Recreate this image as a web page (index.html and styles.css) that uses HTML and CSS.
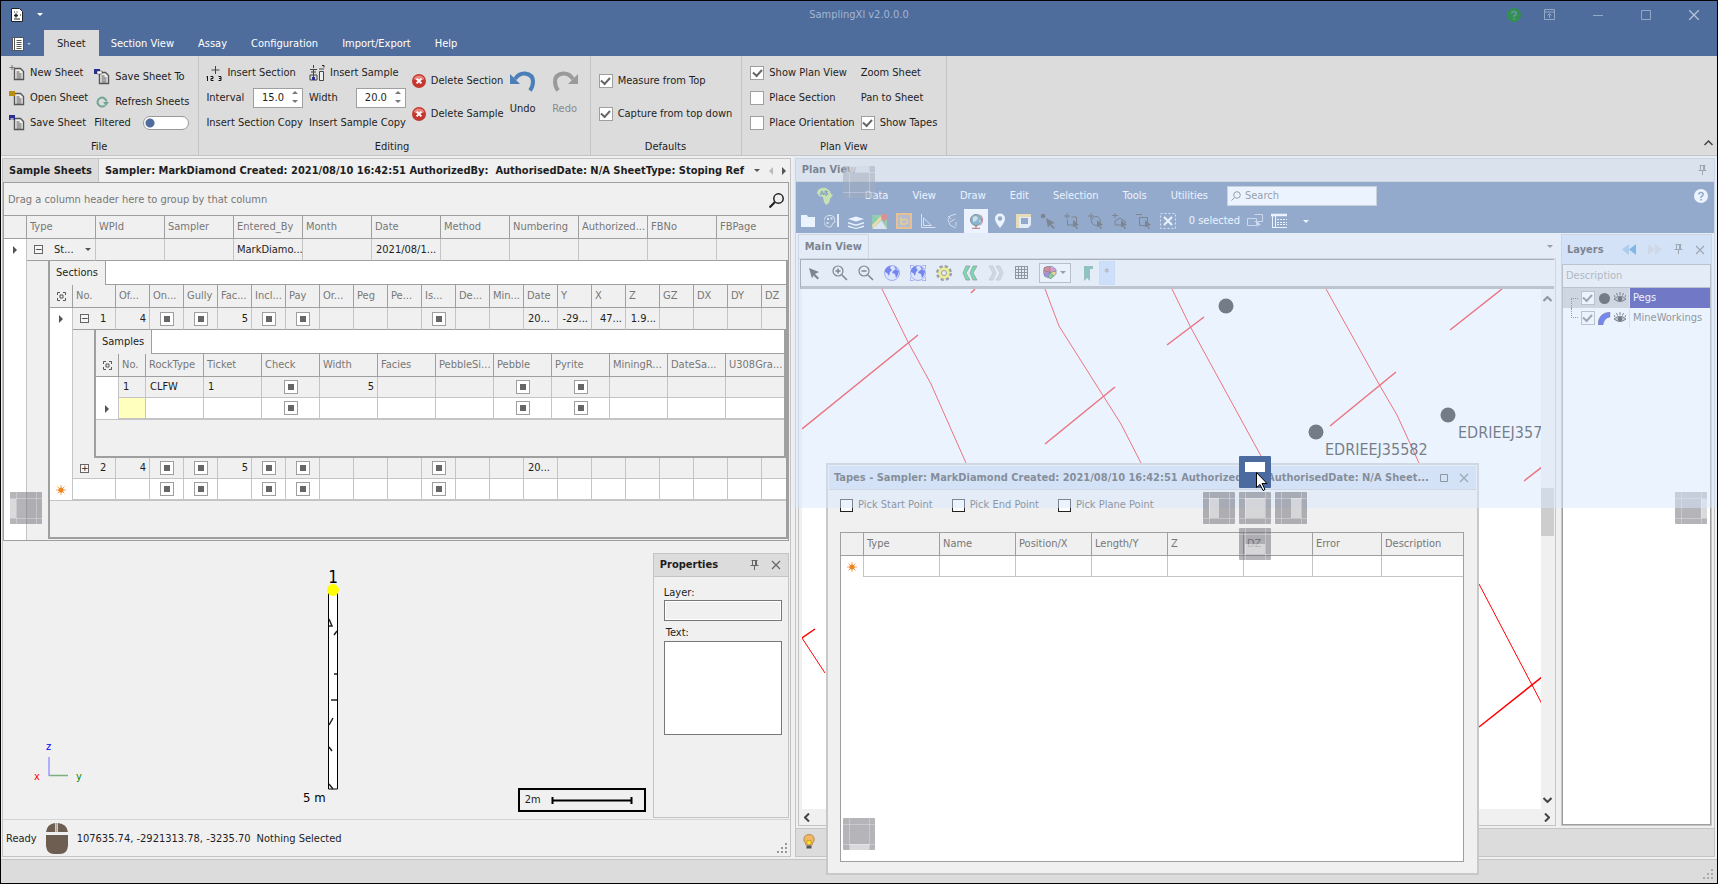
FILE: index.html
```html
<!DOCTYPE html>
<html lang="en">
<head>
<meta charset="utf-8">
<title>SamplingXl v2.0.0.0</title>
<link rel="stylesheet" href="styles.css">
</head>
<body>
<svg class="defs" aria-hidden="true">
  <symbol id="i-doc" viewBox="0 0 16 16"><path d="M5.5 3.500h6l3 3v8h-9z" fill="#eee" stroke="#555" stroke-width="1.400"/><path d="M7.500 7h3M7.500 9h5M7.500 11h5M7.500 13h5" stroke="#555"/></symbol>
  <symbol id="i-pin" viewBox="0 0 9 11"><path d="M1.500.500h6M2.500 1v4M6.500 1v4M5.500 1v4M.500 5.500h8M4.500 6v4" fill="none" stroke="#666"/></symbol>
  <symbol id="i-x" viewBox="0 0 10 10"><path d="M1 1l8 8M9 1l-8 8" stroke="#666" stroke-width="1.200"/></symbol>
  <symbol id="i-focus" viewBox="0 0 9 9"><path d="M.500 3v-2.500h2.500M6 .500h2.500v2.500M8.500 6v2.500h-2.500M3 8.500h-2.500v-2.500M3 3h3v3h-3z" fill="none" stroke="#555"/></symbol>
  <symbol id="i-new" viewBox="0 0 10 10"><path d="M5 0v10M0 5h10M1.500 1.500l7 7M8.500 1.500l-7 7" stroke="#f5a55a"/><circle cx="5" cy="5" r="2.600" fill="#ee8722"/></symbol>
  <symbol id="i-del" viewBox="0 0 14 14"><circle cx="7" cy="7" r="7" fill="#c4382f"/><path d="M1.500 5a6 6 0 0 1 11 0q-5.500 3-11 0" fill="#e8857c"/><path d="M4.600 4.600l4.800 4.800M9.400 4.600l-4.800 4.800" stroke="#fff" stroke-width="2"/></symbol>
  <symbol id="i-sel" viewBox="0 0 16 16"><path d="M9 7l6 5-3 .5 2 3-1.500.5-1.500-3-2 1.500z" fill="#222"/></symbol>
  <symbol id="i-eye" viewBox="0 0 12 12"><path d="M0 7q6-5.500 12 0q-6 5-12 0" fill="#aaa" stroke="#222"/><circle cx="6" cy="7" r="2.300" fill="#111"/><path d="M1 5l-1-2M3.500 3.500l-1-2.500M6 3v-3M8.500 3.500l1-2.500M11 5l1-2" stroke="#222"/></symbol>
  <symbol id="i-globe" viewBox="0 0 16 16"><circle cx="8" cy="8" r="7.500" fill="#dfe3fa" stroke="#6a72e8"/><path d="M1 5q2-4 6-4l-1 2 2 2-2 2-1 4-2-3-2-1zM9 6l3-2 3 2-1 4-2 3-1-4-3-1zM10 1l4 3-3-.5z" fill="#1224e0"/></symbol>
</svg>
<div class="app">
  <header class="titlebar">
    <div class="quick">
      <svg width="12" height="14" viewBox="0 0 12 14"><path d="M.5.5h8l3 3v10h-11z" fill="#fff" stroke="#222"/><path d="M3 4h1M5.500 4h1M3 11h6M9 7h1" stroke="#222"/><path d="M5 5.500v4M3 7.500h4" stroke="#222" stroke-width="1.500"/></svg>
      <i class="caret light"></i>
    </div>
    <h1>SamplingXl v2.0.0.0</h1>
    <div class="winbtns">
      <button aria-label="Help"><svg width="14" height="14"><circle cx="7" cy="7" r="7" fill="#31914f"/><path d="M4.800 5.500q0-2 2.200-2t2.200 2q0 1.200-2.200 2.500v1" fill="none" stroke="#6f93a8" stroke-width="1.700"/><path d="M6.200 10h1.700v1.600h-1.700z" fill="#6f93a8"/></svg></button>
      <button aria-label="Ribbon display"><svg width="11" height="11"><path d="M.5.5h10v10h-10zM.5 3h10M5.500 9v-4M3.500 6.500l2-2 2 2" fill="none" stroke="#95a8c6"/></svg></button>
      <button aria-label="Minimize"><svg width="10" height="10"><path d="M0 5.500h10" stroke="#95a8c6"/></svg></button>
      <button aria-label="Maximize"><svg width="10" height="10"><path d="M.5.5h9v9h-9z" fill="none" stroke="#95a8c6"/></svg></button>
      <button aria-label="Close"><svg width="10" height="10"><path d="M0 0l10 10M10 0L0 10" stroke="#b4c2d8" stroke-width="1.300"/></svg></button>
    </div>
  </header>
  <nav class="tabs">
    <button class="filebtn" aria-label="File menu"><svg width="12" height="14"><path d="M.5.500h11v13h-11z" fill="#fff" stroke="#555"/><path d="M2.500 1v12" stroke="#555"/><path d="M4.500 3.500h5M4.500 5.500h5M4.500 7.500h5M4.500 9.500h5M4.500 11.500h5" stroke="#555"/></svg><i class="caret small"></i></button>
    <button class="tab on">Sheet</button><button class="tab">Section View</button><button class="tab">Assay</button><button class="tab">Configuration</button><button class="tab">Import/Export</button><button class="tab">Help</button>
  </nav>
  <section class="ribbon">
    <div class="group">
      <div class="gbody">
        <div class="col three">
          <button><svg width="16" height="16"><use href="#i-doc"/><path d="M3 0v5M.500 2.500h5" stroke="#777"/></svg>New Sheet</button>
          <button><svg width="16" height="16"><use href="#i-doc"/><path d="M0 1h6v5h-6z" fill="#b98d10"/></svg>Open Sheet</button>
          <button><svg width="16" height="16"><use href="#i-doc"/><path d="M0 0h6v5h-6z" fill="#2a2f8f"/><path d="M1.500 3h3v2h-3z" fill="#aab"/></svg>Save Sheet</button>
        </div>
        <div class="col three">
          <button class="drop"><svg width="16" height="16"><use href="#i-doc"/><path d="M0 0h6v5h-6z" fill="#2a2f8f"/><path d="M3 2h5v3h-5z" fill="#fff" stroke="#333" stroke-width=".500"/></svg>Save Sheet To</button>
          <button class="drop"><svg width="16" height="16" viewBox="0 0 16 16"><path d="M11 11.500a4.500 4.500 0 1 1 1.500-4" fill="none" stroke="#6fa595" stroke-width="2"/><path d="M9 8h6l-3 4z" fill="#6fa595"/></svg>Refresh Sheets</button>
          <label class="filter">Filtered<input type="checkbox" class="toggle"></label>
        </div>
      </div>
      <div class="glabel">File</div>
    </div>
    <div class="group editing">
      <div class="gbody">
        <div class="col three">
          <button><svg width="16" height="16"><path d="M9.500 1v8M5.500 5h8" stroke="#444"/><path d="M1.500 11v5M.500 12h1M4.500 11.500h2.500v2h-2v2h2.500M12.500 11.500h2.500v4h-2.500M13 13.500h2" stroke="#111" fill="none"/></svg>Insert Section</button>
          <label class="spin">Interval<input type="text" value="15.0"><i class="ud"></i></label>
          <button>Insert Section Copy</button>
        </div>
        <div class="col three">
          <button><svg width="16" height="16"><path d="M4.500 0v3M1 4.500h7M2 7h5M4.500 4v8M1 10h7v5h-7z" stroke="#444" fill="none"/><path d="M3 12h3v3h-3z" fill="#2a2f8f"/><path d="M10.500 6.500h4v9h-4z" fill="#eee" stroke="#444"/><path d="M10 4h5" stroke="#444"/><path d="M13 .500h2v2" fill="none" stroke="#222"/></svg>Insert Sample</button>
          <label class="spin">Width<input type="text" value="20.0"><i class="ud"></i></label>
          <button>Insert Sample Copy</button>
        </div>
        <div class="col two">
          <button><svg width="14" height="14"><use href="#i-del"/></svg>Delete Section</button>
          <button><svg width="14" height="14"><use href="#i-del"/></svg>Delete Sample</button>
        </div>
        <div class="bigs">
          <button class="big"><svg width="26" height="22" viewBox="0 0 26 22"><path d="M5 8q4-6 10-5.500q8 1 8 8q0 5-3 9" fill="none" stroke="#4a7fb8" stroke-width="4"/><path d="M0 3l3 3 7 7h-10z" fill="#4a7fb8"/></svg>Undo</button>
          <button class="big dim"><svg width="26" height="22" viewBox="0 0 26 22"><path d="M21 8q-4-6-10-5.500q-8 1-8 8q0 5 3 9" fill="none" stroke="#9a9a9a" stroke-width="4"/><path d="M26 3l-3 3-7 7h10z" fill="#9a9a9a"/></svg>Redo</button>
        </div>
      </div>
      <div class="glabel">Editing</div>
    </div>
    <div class="group">
      <div class="gbody">
        <div class="col two">
          <label><input type="checkbox" class="chk" checked>Measure from Top</label>
          <label><input type="checkbox" class="chk" checked>Capture from top down</label>
        </div>
      </div>
      <div class="glabel">Defaults</div>
    </div>
    <div class="group">
      <div class="gbody">
        <div class="col three">
          <label><input type="checkbox" class="chk" checked>Show Plan View</label>
          <label><input type="checkbox" class="chk">Place Section</label>
          <label><input type="checkbox" class="chk">Place Orientation</label>
        </div>
        <div class="col three">
          <button>Zoom Sheet</button>
          <button>Pan to Sheet</button>
          <label><input type="checkbox" class="chk" checked>Show Tapes</label>
        </div>
      </div>
      <div class="glabel">Plan View</div>
    </div>
    <button class="collapse" aria-label="Collapse ribbon"><svg width="9" height="6"><path d="M.500 5l4-4 4 4" fill="none" stroke="#444" stroke-width="1.500"/></svg></button>
  </section>

  <main class="work">
    <section class="left">
      <div class="sheettabs">
        <button class="stab">Sample Sheets</button>
        <button class="stab open">Sampler: MarkDiamond Created: 2021/08/10 16:42:51 AuthorizedBy:&nbsp; AuthorisedDate: N/A SheetType: Stoping Ref</button>
        <div class="tabnav"><i class="caret"></i><i class="tri l"></i><i class="tri"></i></div>
      </div>
      <div class="grid">
        <div class="grouppanel">Drag a column header here to group by that column
          <svg width="15" height="15"><circle cx="9.500" cy="5.500" r="4.700" fill="none" stroke="#222" stroke-width="1.500"/><path d="M6 9l-5.500 5.500" stroke="#222" stroke-width="2.200"/></svg></div>
        <table class="main">
          <colgroup><col class="w23"><col class="w69" span="10"><col></colgroup>
          <thead><tr><th></th><th>Type</th><th>WPId</th><th>Sampler</th><th>Entered_By</th><th>Month</th><th>Date</th><th>Method</th><th>Numbering</th><th>Authorized...</th><th>FBNo</th><th>FBPage</th></tr></thead>
          <tbody>
          <tr class="row"><td class="ind"><i class="tri"></i></td><td><div class="typecell"><i class="box">−</i><span>St...</span><i class="caret"></i></div></td><td></td><td></td><td class="tight">MarkDiamo...</td><td></td><td>2021/08/1...</td><td></td><td></td><td></td><td></td><td></td></tr>
          <tr><td class="ind"></td><td colspan="11" class="detail d1">
            <div class="sub">
              <div class="strip"><span class="subtab">Sections</span></div>
              <table class="sections">
                <colgroup><col class="w23"><col class="w43"><col class="w34" span="19"><col></colgroup>
                <thead><tr><th><svg width="9" height="9"><use href="#i-focus"/></svg></th><th>No.</th><th>Of...</th><th>On...</th><th>Gully</th><th>Fac...</th><th>Incl...</th><th>Pay</th><th>Or...</th><th>Peg</th><th>Pe...</th><th>Is...</th><th>De...</th><th>Min...</th><th>Date</th><th>Y</th><th>X</th><th>Z</th><th>GZ</th><th>DX</th><th>DY</th><th>DZ</th></tr></thead>
                <tbody>
                <tr class="row"><td class="ind"><i class="tri"></i></td><td><div class="nocell"><i class="box">−</i>1</div></td><td class="r">4</td><td class="c"><input type="checkbox" class="mix" aria-label="On"></td><td class="c"><input type="checkbox" class="mix" aria-label="Gully"></td><td class="r">5</td><td class="c"><input type="checkbox" class="mix" aria-label="Incl"></td><td class="c"><input type="checkbox" class="mix" aria-label="Pay"></td><td></td><td></td><td></td><td class="c"><input type="checkbox" class="mix" aria-label="Is"></td><td></td><td></td><td>20...</td><td class="r">-29...</td><td class="r">47...</td><td class="r">1.9...</td><td></td><td></td><td></td><td></td></tr>
                <tr><td class="ind"></td><td colspan="21" class="detail d2">
                  <div class="sub inner">
                    <div class="strip"><span class="subtab">Samples</span></div>
                    <table>
                      <colgroup><col class="w23"><col class="w27"><col class="w58" span="10"><col></colgroup>
                      <thead><tr><th><svg width="9" height="9"><use href="#i-focus"/></svg></th><th>No.</th><th>RockType</th><th>Ticket</th><th>Check</th><th>Width</th><th>Facies</th><th>PebbleSi...</th><th>Pebble</th><th>Pyrite</th><th>MiningR...</th><th>DateSa...</th><th>U308Gra...</th></tr></thead>
                      <tbody>
                      <tr><td class="ind"></td><td>1</td><td>CLFW</td><td>1</td><td class="c"><input type="checkbox" class="mix" aria-label="Check"></td><td class="r">5</td><td></td><td></td><td class="c"><input type="checkbox" class="mix" aria-label="Pebble"></td><td class="c"><input type="checkbox" class="mix" aria-label="Pyrite"></td><td></td><td></td><td></td></tr>
                      <tr class="blank"><td class="ind"><i class="tri"></i></td><td class="edit"></td><td></td><td></td><td class="c"><input type="checkbox" class="mix" aria-label="Check"></td><td></td><td></td><td></td><td class="c"><input type="checkbox" class="mix" aria-label="Pebble"></td><td class="c"><input type="checkbox" class="mix" aria-label="Pyrite"></td><td></td><td></td><td></td></tr>
                      </tbody>
                    </table>
                    <div class="rest"></div>
                  </div>
                </td></tr>
                <tr><td class="ind"></td><td><div class="nocell"><i class="box">+</i>2</div></td><td class="r">4</td><td class="c"><input type="checkbox" class="mix" aria-label="On"></td><td class="c"><input type="checkbox" class="mix" aria-label="Gully"></td><td class="r">5</td><td class="c"><input type="checkbox" class="mix" aria-label="Incl"></td><td class="c"><input type="checkbox" class="mix" aria-label="Pay"></td><td></td><td></td><td></td><td class="c"><input type="checkbox" class="mix" aria-label="Is"></td><td></td><td></td><td>20...</td><td></td><td></td><td></td><td></td><td></td><td></td><td></td></tr>
                <tr class="blank"><td class="ind"><svg width="10" height="10"><use href="#i-new"/></svg></td><td></td><td></td><td class="c"><input type="checkbox" class="mix" aria-label="On"></td><td class="c"><input type="checkbox" class="mix" aria-label="Gully"></td><td></td><td class="c"><input type="checkbox" class="mix" aria-label="Incl"></td><td class="c"><input type="checkbox" class="mix" aria-label="Pay"></td><td></td><td></td><td></td><td class="c"><input type="checkbox" class="mix" aria-label="Is"></td><td></td><td></td><td></td><td></td><td></td><td></td><td></td><td></td><td></td><td></td></tr>
                </tbody>
              </table>
              <div class="rest"></div>
            </div>
          </td></tr>
          </tbody>
        </table>
      </div>
      <div class="viewer">
        <svg class="scene">
          <path d="M325.500 48v200h9v-200z" fill="#fff" stroke="#000"/>
          <path d="M326 78l3 7h-3M334 90l-3 4M334 133h-3M328 159h6M326 184l4-7M326 206l3 4M326 243l4 5" fill="none" stroke="#222" stroke-width="1.500"/>
          <circle cx="330" cy="49" r="6" fill="#ff0"/>
          <text x="330" y="42" text-anchor="middle" class="t17">1</text>
          <text x="300" y="261" class="t13">5 m</text>
          <path d="M46 216v19" stroke="#9a9aff" stroke-width="1.500"/><path d="M46 234.500h19" stroke="#7fae7f" stroke-width="1.500"/>
          <text x="43" y="209" fill="#00f">z</text><text x="31" y="239" fill="#f00">x</text><text x="73" y="239" fill="#080">y</text>
        </svg>
        <div class="scalebar">2m<svg width="82" height="7"><path d="M1.500 0v7M80.500 0v7" stroke="#000" stroke-width="2"/><path d="M1 3.500h80" stroke="#000" stroke-width="2"/></svg></div>
        <aside class="props">
          <h2>Properties<svg width="9" height="11"><use href="#i-pin"/></svg><svg width="10" height="10"><use href="#i-x"/></svg></h2>
          <div class="form"><label for="lay">Layer:</label><input id="lay" type="text" readonly><label for="txt" class="in">Text:</label><textarea id="txt"></textarea></div>
        </aside>
      </div>
      <div class="status"><span>Ready</span>
        <svg class="mouse" width="22" height="32" viewBox="0 0 22 32"><path d="M0 9q1-8 9-9v9zM12 0q9 1 10 9h-10zM0 12h22v11q-1 8-8 8h-6q-7 0-8-8z" fill="#6e5d51"/><path d="M10.500 0v9" stroke="#aaa39c" stroke-width="2"/></svg>
        <span>107635.74, -2921313.78, -3235.70</span><span>Nothing Selected</span>
        <svg class="grip" width="11" height="11"><path d="M8 0h2v2h-2zM4 4h2v2h-2zM8 4h2v2h-2zM0 8h2v2h-2zM4 8h2v2h-2zM8 8h2v2h-2z" fill="#999"/></svg></div>
    </section>

    <section class="plan">
      <h2 class="planhead">Plan View<svg width="9" height="11"><use href="#i-pin"/></svg></h2>
      <div class="bluebar">
        <nav class="menu">
          <svg width="18" height="18" viewBox="0 0 18 18"><path d="M2 3q3-3 8-2l4 3 1 3 2 1-3 4-1 4-3 2-2-3-1-5-4-1-2-3z" fill="#b4dc6a"/><path d="M4 8l2-4 2 4M5 7h2M9 8v-4h2q1 1-1 2q3 0 1 2z" fill="none" stroke="#234a86"/></svg>
          <button>Data</button><button>View</button><button>Draw</button><button>Edit</button><button>Selection</button><button>Tools</button><button>Utilities</button>
          <label class="search"><svg width="10" height="10"><circle cx="6" cy="4" r="3.300" fill="none" stroke="#555"/><path d="M3.500 6.500l-3 3" stroke="#555"/></svg><input type="text" placeholder="Search" aria-label="Search"></label>
          <svg class="help" width="14" height="14"><circle cx="7" cy="7" r="7" fill="#fff"/><path d="M4.800 5.500q0-2 2.200-2t2.200 2q0 1.200-2.200 2.500v1" fill="none" stroke="#4f6d9c" stroke-width="1.500"/><path d="M6.200 10h1.700v1.600h-1.700z" fill="#4f6d9c"/></svg>
        </nav>
        <div class="tools">
          <button aria-label="Open"><svg width="16" height="16"><path d="M1 2h6l1 2h7v10h-14z" fill="#fff"/></svg></button>
          <button aria-label="Palette"><svg width="16" height="16"><path d="M10 4q-2-2-5-1.500a5.500 5.500 0 0 0 1 11.500q2 0 2-2t3-3z" fill="none" stroke="#ddd"/><path d="M3 5h2v2h-2zM2.500 9h2v2h-2zM6.500 4.500h2v2h-2z" fill="#ddd"/><path d="M14 1v13" stroke="#eee" stroke-width="2"/></svg></button>
          <button aria-label="Layers"><svg width="16" height="16"><path d="M0 6l8-2.500 8 2.500-8 2.500zM0 9l8 2.500 8-2.500v1.500l-8 2.500-8-2.500zM0 12.500l8 2.500 8-2.500v1.500l-8 2-8-2z" fill="#fff"/></svg></button>
          <button aria-label="Map"><svg width="16" height="16"><path d="M0 2h15v14h-15z" fill="#58b368"/><path d="M0 16l9-9 6 9z" fill="#dfe3e8"/><path d="M0 2l9 6-9 8z" fill="#3fae62"/><path d="M0 12l10-10h3l-12 14z" fill="#f7d154"/><path d="M12 9q-4-4-3-6.500q3-4 6.500 0q1 2.500-3.500 6.500" fill="#d93a35"/></svg></button>
          <button aria-label="Bing"><svg width="16" height="16"><path d="M1 1h14v14h-14z" fill="#8d93a0" stroke="#f79a26" stroke-width="2"/><path d="M5 4v7h4q3-.500 2.500-3t-6-1" fill="none" stroke="#ffad2c" stroke-width="1.600"/></svg></button>
          <button aria-label="Angle"><svg width="16" height="16"><path d="M1.500 1v13.500h14M3.500 5v7.500h8z" fill="none" stroke="#d0d6e0"/></svg></button>
          <button aria-label="Compass"><svg width="16" height="16"><path d="M12 1l-6 2-2 4 2 5 6 3M4 3l3 3M6 9l5-3M12 9v4" fill="none" stroke="#c8cfdb"/></svg></button>
          <button aria-label="Globe" class="sel"><svg width="16" height="16"><path d="M4 15.500h8M8 12v3" stroke="#a33" stroke-width="1.500"/><circle cx="8" cy="7" r="5.500" fill="#3b87a8" stroke="#333"/><path d="M5 4l3-1 2 2-2 3-3 1zM11 8l1.500-2v4z" fill="#c8dcc0"/><path d="M12 1.500a7 7 0 0 1 0 11" fill="none" stroke="#a33"/></svg></button>
          <button aria-label="Marker"><svg width="16" height="16"><path d="M8 15q-5-6-5-9.500a5 5 0 0 1 10 0q0 3.500-5 9.500" fill="#fff"/><circle cx="8" cy="5.500" r="2.300" fill="#4f6d9c"/></svg></button>
          <button aria-label="Ruler"><svg width="16" height="16"><path d="M0 1h15v11l-3 3h-12z" fill="#eceef2"/><path d="M0 1h15v3h-15zM0 4h3v11h-3z" fill="#f5cf70"/><path d="M5 5h7v6h-7z" fill="#51679a"/></svg></button>
          <button aria-label="Pick"><svg width="16" height="16"><circle cx="3" cy="3" r="2.300" fill="#222"/><path d="M6 5l9 5-4 1 4 4-1.500 1-4-4-1.500 3z" fill="#222"/></svg></button>
          <button aria-label="Add rectangle"><svg width="16" height="16"><path d="M3 0v6M0 3h6M3.500 7v5h9v-8h-5" fill="none" stroke="#222"/><use href="#i-sel"/></svg></button>
          <button aria-label="Add circle"><svg width="16" height="16"><path d="M3 0v6M0 3h6" stroke="#222"/><circle cx="8" cy="8" r="4.500" fill="none" stroke="#222"/><use href="#i-sel"/></svg></button>
          <button aria-label="Add polygon"><svg width="16" height="16"><path d="M3 0v5M0 2.500h6M3 12l0-4 5-3 6 4-3 3z" fill="none" stroke="#222"/><use href="#i-sel"/></svg></button>
          <button aria-label="Remove rectangle"><svg width="16" height="16"><path d="M0 1.500h6M3.500 4.500h8v8h-8z" fill="none" stroke="#222"/><use href="#i-sel"/></svg></button>
          <button aria-label="Clear selection"><svg width="16" height="16"><path d="M.5.5h15v15h-15z" fill="none" stroke="#dde" stroke-dasharray="2 2"/><path d="M4 4l8 8M12 4l-8 8" stroke="#fff" stroke-width="2"/></svg></button>
          <span>0 selected</span>
          <button aria-label="Copy"><svg width="16" height="16"><path d="M.5 5.500h9v7h-9zM7.500 1.500h8v7h-8" fill="none" stroke="#c3cbd9"/><path d="M9 7l5 5-3 .5v3z" fill="#c3cbd9"/></svg></button>
          <button aria-label="Table"><svg width="16" height="16"><path d="M0 2h16" stroke="#fff" stroke-width="2.500"/><path d="M1 14.500h15M1.500 3v12M4.500 3v12" stroke="#fff"/><path d="M6 6.500h10M6 9.500h10M6 11.500h10" stroke="#fff" stroke-dasharray="2 1"/></svg></button>
          <i class="caret light"></i>
        </div>
      </div>
      <div class="planbody">
        <div class="mapcol">
          <div class="viewtabs"><button class="vtab">Main View</button><i class="caret"></i></div>
          <div class="maparea">
            <div class="maptools">
              <button aria-label="Pointer"><svg width="16" height="16"><path d="M3 3l10 4-4 2 4 4-1.500 1.500-4-4-1.500 3z" fill="#222"/></svg></button>
              <button aria-label="Zoom in"><svg width="16" height="16"><circle cx="6" cy="6" r="5" fill="none" stroke="#222" stroke-width="1.200"/><path d="M3.500 6h5M6 3.500v5M10 10l5 5" stroke="#222" stroke-width="1.500"/></svg></button>
              <button aria-label="Zoom out"><svg width="16" height="16"><circle cx="6" cy="6" r="5" fill="none" stroke="#222" stroke-width="1.200"/><path d="M3.500 6h5M10 10l5 5" stroke="#222" stroke-width="1.500"/></svg></button>
              <button aria-label="Zoom extents"><svg width="16" height="16"><use href="#i-globe"/></svg></button>
              <button aria-label="Zoom selection"><svg width="16" height="16"><use href="#i-globe"/><path d="M0 4v-4h4M12 0h4v4M16 12v4h-4M4 16h-4v-4" fill="none" stroke="#1c2be0"/></svg></button>
              <button aria-label="Settings"><svg width="16" height="16"><circle cx="8" cy="8" r="6.500" fill="#ffee33" stroke="#555" stroke-width="3" stroke-dasharray="3 2.100"/><circle cx="8" cy="8" r="5.700" fill="#ffee33"/><circle cx="8" cy="8" r="2.500" fill="#f4f4f4" stroke="#555"/></svg></button>
              <button aria-label="Back"><svg width="16" height="16"><path d="M4 1h4l-4 7 4 7h-4l-3-7zM11 1h4l-4 7 4 7h-4l-3-7z" fill="#19d35e" stroke="#444" stroke-width=".700"/></svg></button>
              <button aria-label="Forward"><svg width="16" height="16"><path d="M5 1h-4l4 7-4 7h4l3-7zM12 1h-4l4 7-4 7h4l3-7z" fill="#c8c8c8" stroke="#aaa" stroke-width=".700"/></svg></button>
              <button aria-label="Grid"><svg width="14" height="14"><path d="M.5 0v13M3.500 0v13M6.500 0v13M9.500 0v13M12.500 0v13M0 .500h13M0 3.500h13M0 6.500h13M0 9.500h13M0 12.500h13" stroke="#444"/></svg></button>
              <button aria-label="Colours" class="combo"><svg width="14" height="13"><path d="M1 1h6v5l-6 2z" fill="#d33"/><path d="M7 1l5 1 1 4-6 1z" fill="#e24bb0"/><path d="M7 6l6-1v4l-3 1z" fill="#f0d030"/><path d="M7 6l4 4-3 3-3-2z" fill="#3fc24f"/><path d="M7 6l-2 5-4-1v-3z" fill="#5a3fd0"/><path d="M7 6.500l-6-2M7 6.500v-6M7 6.500l6-1.500M7 6.500l4 4M7 6.500l-2 5M1 2l3-1.500h5l4 3v4l-5 5-6-2-1.500-4z" fill="none" stroke="#222" stroke-width=".800"/></svg><i class="caret"></i></button>
              <button aria-label="Bookmark"><svg width="12" height="16"><path d="M2 1h9v3h-3v12l-3-3-3 3z" fill="#4a9c80"/></svg></button>
              <button class="star">*</button>
            </div>
            <div class="mapwrap">
              <svg class="map">
                <g fill="none" stroke="#f00">
                  <path d="M80 0l26 53 23 42 35 79M243 0l14 37 62 98 20 39M370 0l19 39 70 128M524 0l54 97 17 29 22 48M677 295l63 120M0 349l23 35"/>
                  <path stroke-width="1.500" d="M0 140l116-94M173 0l-4 4M243 155l70-57M365 56l37-28M528 137l66-54M648 41l52-41M722 192l18-14M677 438l63-50M13 340l-13 9"/>
                </g>
                <g fill="#111"><circle cx="424" cy="17" r="7.500"/><circle cx="514" cy="143" r="7.500"/><circle cx="646" cy="126" r="7.500"/>
                <text x="523" y="166" class="t16">EDRIEEJ35582</text><text x="656" y="149" class="t16">EDRIEEJ357</text></g>
              </svg>
              <div class="vscroll"><svg width="9" height="6"><path d="M.500 5l4-4 4 4" fill="none" stroke="#444" stroke-width="2"/></svg><i class="thumb"></i><svg width="9" height="6"><path d="M.500 1l4 4 4-4" fill="none" stroke="#444" stroke-width="2"/></svg></div>
            </div>
            <div class="hscroll"><svg width="6" height="9"><path d="M5 .500l-4 4 4 4" fill="none" stroke="#444" stroke-width="2"/></svg><svg width="6" height="9"><path d="M1 .500l4 4-4 4" fill="none" stroke="#444" stroke-width="2"/></svg></div>
          </div>
        </div>
        <aside class="layers">
          <h2>Layers<svg width="14" height="11"><path d="M7 0v11l-7-5.500z" fill="#7fb4dc"/><path d="M14 0v11l-7-5.500z" fill="#2a86c8"/></svg><svg width="14" height="11"><path d="M7 0v11l7-5.500zM0 0v11l7-5.500z" fill="#c4c8ce"/></svg><svg width="9" height="11"><use href="#i-pin"/></svg><svg width="10" height="10"><use href="#i-x"/></svg></h2>
          <div class="tree">
            <div class="thead">Description</div>
            <label class="trow on"><i class="branch"></i><input type="checkbox" class="chk" checked><svg width="13" height="13"><circle cx="6.500" cy="6.500" r="5.500" fill="#111"/></svg><svg width="12" height="12"><use href="#i-eye"/></svg><span>Pegs</span></label>
            <label class="trow"><i class="branch end"></i><input type="checkbox" class="chk" checked><svg width="13" height="13"><path d="M0 13q0-12 12-13v5q-6 1-7 8z" fill="#1224e0" stroke="#333" stroke-width=".500"/></svg><svg width="12" height="12"><use href="#i-eye"/></svg><span>MineWorkings</span></label>
          </div>
        </aside>
      </div>
      <div class="planstatus"><svg width="14" height="16" viewBox="0 0 14 16"><path d="M4 11q0-2-2-4q-1-6 5-6.500q6 .5 5 6.500q-2 2-2 4z" fill="#f3b765" stroke="#b98a50"/><path d="M5 10v-4l2 1 2-1v4" fill="#ffe832" stroke="#c9a520"/><path d="M4.500 11.500h5v3h-5z" fill="#555"/></svg></div>
    </section>

    <div class="tapes">
      <div class="tapehead"><b>Tapes - Sampler: MarkDiamond Created: 2021/08/10 16:42:51 AuthorizedBy:&nbsp; AuthorisedDate: N/A Sheet...</b><svg width="8" height="8"><path d="M.5.5h7v7h-7z" fill="none" stroke="#444"/></svg><svg width="10" height="10"><use href="#i-x"/></svg></div>
      <div class="picks"><label><input type="checkbox" class="pick">Pick Start Point</label><label><input type="checkbox" class="pick">Pick End Point</label><label><input type="checkbox" class="pick">Pick Plane Point</label></div>
      <div class="tapegrid">
        <table>
          <colgroup><col class="w23"><col class="w76" span="5"><col class="w69" span="2"><col></colgroup>
          <thead><tr><th></th><th>Type</th><th>Name</th><th>Position/X</th><th>Length/Y</th><th>Z</th><th>DZ</th><th>Error</th><th>Description</th></tr></thead>
          <tbody><tr class="blank"><td class="ind"><svg width="10" height="10"><use href="#i-new"/></svg></td><td></td><td></td><td></td><td></td><td></td><td></td><td></td><td></td></tr></tbody>
        </table>
      </div>
    </div>
    <i class="guide gl"></i><i class="guide gt"></i><i class="guide gb"></i><i class="guide gr"></i>
    <div class="dropzone"></div>
    <div class="cross"><i class="guide top on"></i><i class="guide lft"></i><i class="guide mid"></i><i class="guide rgt"></i><i class="guide bot"></i>
      <svg class="cursor" width="12" height="19"><path d="M.5.500v15l3.500-3 3 6 2-1-3-6h5z" fill="#fff" stroke="#000"/></svg></div>
  </main>
  <footer><svg width="11" height="11"><path d="M8 0h2v2h-2zM4 4h2v2h-2zM8 4h2v2h-2zM0 8h2v2h-2zM4 8h2v2h-2zM8 8h2v2h-2z" fill="#aaa"/></svg></footer>
</div>
</body>
</html>
```
FILE: styles.css
```css
* { box-sizing: border-box; }
body, button, input, textarea {
  font: 11px/14px "DejaVu Sans Condensed", "Noto Sans", sans-serif;
  color: #1e1e1e;
}
body { margin: 0; overflow: hidden; }
button { border: 0; background: none; padding: 0; white-space: nowrap; }
input, textarea { margin: 0; padding: 0; }
h1, h2 { margin: 0; font-size: 11px; }
svg { flex: none; display: block; }
.defs { position: absolute; width: 0; height: 0; }
.app {
  height: 100vh; border: 1px solid #000;
  display: flex; flex-direction: column; background: #f0f0f0;
}
.caret { width: 0; height: 0; flex: none; border: 3px solid transparent; border-top-color: #555; border-bottom: 0; }
.caret.light { border-top-color: #fff; }
.caret.small { border-width: 2px; border-bottom: 0; border-top-color: #b4c2d8; }
.tri { display: inline-block; width: 0; height: 0; border: 4px solid transparent; border-left-color: #555; border-right: 0; }
.tri.l { border: 4px solid transparent; border-right-color: #bbb; border-left: 0; }

/* title bar and ribbon */
.titlebar {
  height: 29px; flex: none; background: #4f6d9c; padding-bottom: 2px;
  display: grid; grid-template-columns: 1fr auto 1fr; align-items: center;
}
.titlebar h1 { font-weight: normal; color: #a3b6d4; }
.quick { display: flex; gap: 14px; align-items: center; padding: 0 10px; }
.winbtns { display: flex; justify-content: flex-end; align-items: center; padding-right: 18px; gap: 38px; }
.winbtns button:first-child { margin-right: -15px; }
.tabs { height: 26px; flex: none; background: #4f6d9c; display: flex; }
.filebtn { width: 43px; display: flex; align-items: center; padding: 2px 0 0 11px; gap: 3px; }
.tab { padding: 2px 12px 0; color: #fff; }
.tab.on { background: #dcdcdc; color: #1e1e1e; padding: 2px 13px 0; }
.ribbon {
  height: 100px; flex: none; background: #dcdcdc; border-bottom: 1px solid #c4c4c4;
  display: flex; position: relative;
}
.group { border-right: 1px solid #c4c4c4; display: flex; flex-direction: column; padding: 4px 9px 0 8px; }
.group.editing { padding-right: 12px; padding-left: 7px; }
.gbody { display: flex; flex: 1; gap: 6px; }
.glabel { text-align: center; height: 15px; }
.col { display: flex; flex-direction: column; }
.col.three > * { height: 25px; }
.col.two { padding-top: 4px; }
.col.two > * { height: 33px; }
.col > * { display: flex; align-items: center; gap: 5px; white-space: nowrap; }
.col.three > .drop { padding-top: 8px; }
.col button, .col label { color: #1e1e1e; }
.filter { gap: 12px; justify-content: space-between; }
.toggle {
  appearance: none; width: 46px; height: 14px; border: 1px solid #999; border-radius: 7px;
  background: radial-gradient(circle at 6px 6px, #4f6d9c 4px, #fff 5px);
}
.spin { justify-content: space-between; position: relative; }
.spin input { width: 50px; height: 20px; border: 1px solid #9f9f9f; background: #fff; padding-left: 8px; }
.ud { position: absolute; right: 5px; top: 6px; width: 6px; height: 12px; }
.ud::before, .ud::after { content: ""; position: absolute; left: 0; border: 3px solid transparent; }
.ud::before { top: 0; border-top: 0; border-bottom-color: #777; }
.ud::after { bottom: 0; border-bottom: 0; border-top-color: #777; }
.bigs { display: flex; gap: 16px; padding: 11px 0 0; }
.big { display: flex; flex-direction: column; align-items: center; gap: 9px; }
.big.dim { color: #8a8a8a; }
.chk {
  appearance: none; width: 14px; height: 14px; flex: none; border: 1px solid #9f9f9f; background: #fff;
  display: grid; place-items: center;
}
.chk:checked::before { content: ""; width: 7px; height: 4px; border: solid #666; border-width: 0 0 2px 2px; rotate: -48deg; margin-bottom: 2px; }
.collapse { position: absolute; right: 4px; bottom: 9px; }

/* workspace */
.work {
  flex: 1; min-height: 0; position: relative;
  display: grid; grid-template-columns: 6fr 7fr; gap: 4px; padding: 2px 2px 2px 1px;
}
.left { min-width: 0; display: flex; flex-direction: column; border: 1px solid #c4c4c4; border-top: 0; }
.sheettabs { height: 24px; flex: none; display: flex; border-top: 1px solid #c4c4c4; }
.stab { font-weight: bold; padding: 0 6px; border-right: 1px solid #c4c4c4; background: #dcdcdc; }
.stab.open { background: none; border: 0; flex: 1; min-width: 0; overflow: hidden; text-align: left; padding-right: 0; }
.tabnav { display: flex; gap: 9px; align-items: center; padding: 0 4px 0 4px; }
.grid { flex: none; border: 1px solid #9f9f9f; background: #fff; margin-right: 1px; }
.grouppanel {
  height: 33px; background: #f0f0f0; border-bottom: 1px solid #9f9f9f; color: #777;
  display: flex; align-items: center; justify-content: space-between; padding: 2px 4px 0;
}
table { width: 100%; table-layout: fixed; border-collapse: separate; border-spacing: 0; }
th, td { padding: 0 0 0 4px; white-space: nowrap; overflow: hidden; }
th { height: 23px; text-align: left; font-weight: normal; color: #777; background: #f0f0f0; border-right: 1px solid #9f9f9f; border-bottom: 1px solid #9f9f9f; }
td { height: 21px; background: #f0f0f0; border-right: 1px solid #c4c4c4; border-bottom: 1px solid #c4c4c4; }
th:last-child, td:last-child { border-right: 0; }
th svg, .ind svg { margin: 0 auto; }
th { padding-left: 3px; }
th:first-child { padding: 0; }
.row > td { height: 22px; border-bottom-color: #9f9f9f; }
.blank td { background: #fff; }
td.ind { background: #fff; border-bottom: 0; padding: 0; text-align: center; vertical-align: middle; }
.ind .tri { vertical-align: middle; }
td.edit { background: #ffffbe; }
td.tight { padding-left: 3px; }
td.r { text-align: right; padding: 0 3px 0 0; }
td.c { text-align: center; padding: 0; }
td.detail { height: auto; border: 0; overflow: visible; }
td.d1 { padding: 0 0 1px 21px; }
td.d2 { padding: 0 0 0 21px; }
.w23 { width: 23px; } .w27 { width: 27px; } .w34 { width: 34px; }
.w43 { width: 43px; } .w58 { width: 58px; } .w69 { width: 69px; } .w76 { width: 76px; }
.sub { border: 2px solid #9f9f9f; border-top: 0; }
.strip { height: 24px; display: flex; background: #fff; border-bottom: 1px solid #9f9f9f; }
.subtab { height: 24px; background: #f0f0f0; border-right: 1px solid #9f9f9f; padding: 5px 7px 0 6px; }
.rest { height: 37px; background: #f0f0f0; border-top: 1px solid #c4c4c4; }
.box {
  width: 9px; height: 9px; flex: none; border: 1px solid #666; background: #f6f6f6;
  font: normal 9px/7px "DejaVu Sans", sans-serif; display: grid; place-items: center;
}
.typecell, .nocell { display: flex; align-items: center; gap: 11px; padding-left: 3px; }
.typecell .caret { margin-left: auto; margin-right: 5px; }
.mix {
  appearance: none; width: 14px; height: 14px; border: 1px solid #9f9f9f; vertical-align: middle;
  background: linear-gradient(#666, #666) center / 6px 6px no-repeat #fff;
}

/* section viewer */
.viewer { flex: 1; min-height: 0; position: relative; display: flex; }
.scene { flex: 1; height: 100%; }
.t16 { font-size: 16px; }
.t17 { font-size: 17px; }
.t13 { font-size: 13px; }
.scalebar {
  position: absolute; right: 144px; bottom: 7px; width: 128px; height: 24px; border: 2px solid #000;
  display: flex; align-items: center; gap: 10px; padding: 0 5px;
}
.props { width: 136px; margin: 12px 1px 1px 0; border: 1px solid #c4c4c4; }
.props h2 { height: 23px; background: #dcdcdc; border-bottom: 1px solid #c4c4c4; display: flex; align-items: center; padding: 0 7px 0 6px; gap: 12px; }
.props h2 svg:first-of-type { margin-left: auto; }
.form { display: flex; flex-direction: column; padding: 9px 6px 0 10px; }
.form input, .form textarea { width: 100%; border: 1px solid #777; border-radius: 0; background: #f0f0f0; height: 21px; box-shadow: inset 0 0 0 1px #fff; }
.form textarea { height: 94px; background: #fff; resize: none; }
.form .in { padding: 5px 2px 1px; }
.status {
  height: 37px; flex: none; border-top: 1px solid #d4d4d4; position: relative;
  display: flex; align-items: center; gap: 6px; padding: 2px 0 0 3px;
}
.mouse { margin: 0 3px; }
.grip { position: absolute; right: 2px; bottom: 2px; }

/* plan view */
.plan { min-width: 0; display: flex; flex-direction: column; border: 1px solid #c4c4c4; }
.planhead { height: 23px; flex: none; background: #dcdcdc; border-bottom: 1px solid #c4c4c4; display: flex; align-items: center; justify-content: space-between; padding: 0 7px 0 6px; }
.bluebar { background: #4f6d9c; height: 51px; flex: none; }
.menu { display: flex; align-items: center; height: 27px; padding: 0 6px 0 20px; }
.menu > svg:first-child { margin-right: 19px; }
.menu button { color: #fff; padding: 0 12px; }
.search { display: flex; align-items: center; gap: 4px; width: 150px; height: 20px; background: #fff; border: 1px solid #bbb; padding-left: 3px; margin-left: 7px; }
.search input { border: 0; width: 100%; background: none; }
.search input::placeholder { color: #555; opacity: 1; }
.help { margin-left: auto; }
.tools { display: flex; align-items: center; height: 24px; }
.tools button { width: 24px; height: 24px; display: grid; place-items: center; flex: none; }
.tools .sel { background: #fff; }
.tools span { color: #fff; padding: 0 3px 0 9px; }
.tools .caret { margin-left: 12px; }
.planbody { flex: 1; min-height: 0; display: flex; gap: 5px; padding: 1px 2px 2px; }
.mapcol { flex: 1; min-width: 0; display: flex; flex-direction: column; }
.viewtabs { height: 24px; flex: none; display: flex; align-items: center; justify-content: space-between; padding-right: 3px; }
.vtab { font-weight: bold; border: 1px solid #c4c4c4; border-bottom: 0; height: 24px; padding: 0 6px; }
.maparea { flex: 1; min-height: 0; border: 1px solid #c4c4c4; display: flex; flex-direction: column; padding: 0 1px; }
.maptools {
  height: 30px; flex: none; border: solid #777; border-width: 1px 0 0 1px; border-bottom: 3px solid #a0a0a0;
  display: flex; align-items: center; gap: 2px; padding: 0 0 1px 1px;
}
.maptools button { width: 24px; height: 24px; display: grid; place-items: center; flex: none; }
.maptools .combo { width: 32px; height: 20px; border: 1px solid #999; background: #fafafa; display: flex; align-items: center; justify-content: center; gap: 3px; margin: 0 3px; }
.maptools .star { width: 16px; background: #c4d8f4; border: 1px solid #bcd0ee; color: #666; margin-left: -3px; }
.mapwrap { flex: 1; min-height: 0; display: flex; }
.map { flex: 1; min-width: 0; height: 100%; background: #fff; margin: 0 0 0 2px; }
.vscroll { width: 13px; background: #f0f0f0; display: flex; flex-direction: column; align-items: center; justify-content: space-between; padding: 7px 0 6px; }
.thumb { width: 13px; height: 48px; background: #cdcdcd; margin-bottom: 75px; }
.hscroll { height: 16px; flex: none; display: flex; align-items: center; justify-content: space-between; padding: 0 4px; }
.layers { width: 151px; border: 1px solid #c4c4c4; display: flex; flex-direction: column; }
.layers h2 { height: 29px; flex: none; background: #d1ddf1; display: flex; align-items: center; gap: 12px; padding: 0 6px 0 5px; }
.layers h2 svg:first-of-type { margin-left: auto; }
.tree { flex: 1; background: #fff; border: 1px solid #9f9f9f; }
.thead { height: 23px; background: #f0f0f0; border-bottom: 1px solid #9f9f9f; color: #888; padding: 4px 3px; }
.trow { height: 20px; display: flex; align-items: center; gap: 3px; padding-left: 8px; }
.trow.on { background: #c4c4c4; }
.trow span { flex: 1; line-height: 20px; padding-left: 3px; border-left: 1px solid #ddd; color: #444; }
.trow.on span { background: #0a0a90; color: #fff; }
.branch { width: 7px; height: 10px; align-self: flex-end; border: dotted #555; border-width: 1px 0 0 1px; }
.branch.end { align-self: flex-start; border-width: 0 0 1px 1px; }
.planstatus { height: 28px; flex: none; background: #dcdcdc; border-top: 1px solid #c4c4c4; padding: 5px 6px; }

/* floating window */
.tapes { position: absolute; left: 825px; top: 307px; width: 653px; height: 412px; z-index: 1; background: #f0f0f0; border: 2px solid #c8c8c8; display: flex; flex-direction: column; padding: 1px; }
.tapehead { height: 24px; flex: none; background: #d1ddf1; border-bottom: 1px solid #c4c4c4; display: flex; align-items: center; gap: 11px; padding: 0 7px 0 5px; }
.tapehead b { flex: 1; min-width: 0; white-space: nowrap; color: #333; }
.picks { display: flex; gap: 19px; padding: 8px 11px; }
.picks label { display: flex; align-items: center; gap: 5px; color: #444; }
.pick { appearance: none; width: 13px; height: 13px; border: 1px solid #222; background: #fff; }
.tapegrid { flex: 1; margin: 12px 12px 10px 11px; border: 1px solid #9f9f9f; background: #fff; }

/* docking overlay */
.dropzone { position: absolute; top: 0; right: 0; width: calc(700% / 13); height: 50%; z-index: 2; background: rgba(215, 231, 253, .5); pointer-events: none; }
.guide {
  position: absolute; width: 32px; height: 32px; z-index: 3; border-radius: 1px;
  background:
    linear-gradient(rgba(255,255,255,.3), rgba(255,255,255,.3)) 6px 0 / 1px 32px no-repeat,
    linear-gradient(rgba(255,255,255,.3), rgba(255,255,255,.3)) 26px 0 / 1px 32px no-repeat,
    linear-gradient(rgba(255,255,255,.3), rgba(255,255,255,.3)) 0 6px / 32px 1px no-repeat,
    linear-gradient(rgba(255,255,255,.3), rgba(255,255,255,.3)) 0 26px / 32px 1px no-repeat,
    rgba(112,112,120,.52);
}
.guide::after { content: ""; position: absolute; background: rgba(255,255,255,.5); }
.gl { left: 9px; top: 336px; } .gl::after { left: 0; top: 7px; width: 6px; height: 19px; }
.gt { left: 842px; top: 10px; z-index: 1; } .gt::after { left: 7px; top: 0; width: 19px; height: 6px; }
.gb { left: 842px; top: 662px; } .gb::after { left: 7px; bottom: 0; width: 19px; height: 6px; }
.gr { right: 10px; top: 336px; z-index: 1; } .gr::after { right: 0; top: 7px; width: 6px; height: 19px; }
.cross { position: absolute; left: 1202px; top: 300px; width: 104px; height: 104px; z-index: 3; }
.top { left: 36px; top: 0; } .top::after { left: 6px; top: 6px; width: 20px; height: 10px; }
.top.on { background: #4a6aa0; } .top.on::after { background: #fff; }
.lft { left: 0; top: 36px; } .lft::after { left: 6px; top: 6px; width: 10px; height: 20px; }
.mid { left: 36px; top: 36px; } .mid::after { left: 6px; top: 6px; width: 20px; height: 20px; }
.rgt { left: 72px; top: 36px; } .rgt::after { right: 6px; top: 6px; width: 10px; height: 20px; }
.bot { left: 36px; top: 72px; } .bot::after { left: 6px; bottom: 6px; width: 20px; height: 10px; }
.cursor { position: absolute; left: 53px; top: 16px; z-index: 4; }

footer { height: 24px; flex: none; background: #dcdcdc; border-top: 1px solid #c4c4c4; display: flex; justify-content: flex-end; align-items: flex-end; padding: 3px; }
```
